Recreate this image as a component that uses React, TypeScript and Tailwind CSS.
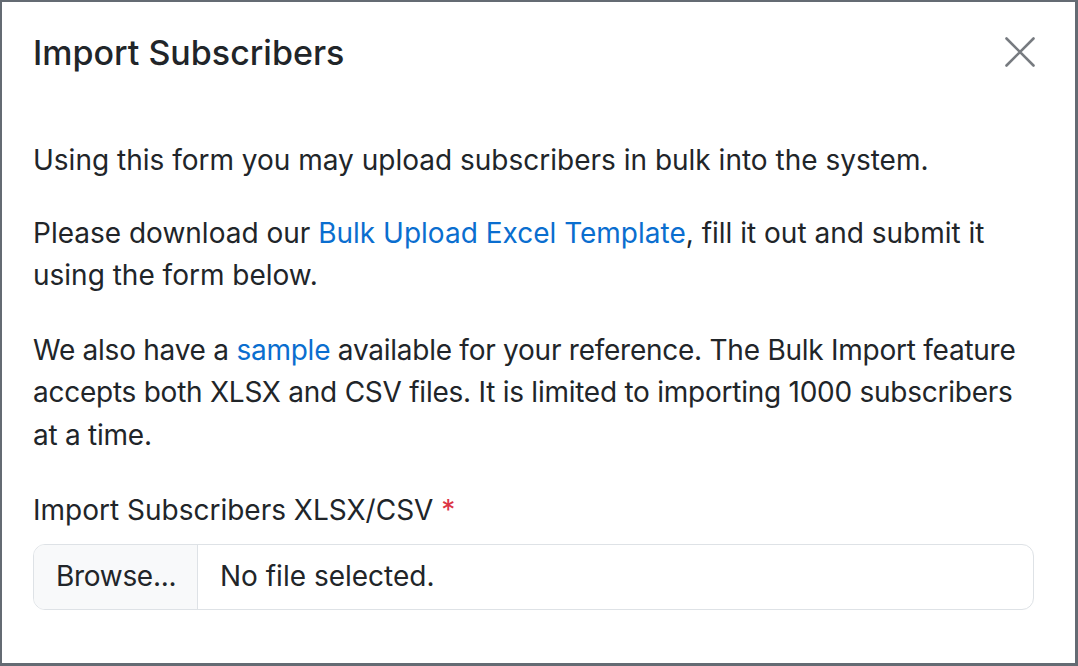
const App = () => {
    return (
        <div className="h-[666px] w-[1078px] bg-[#646b73] pb-[3px] pl-[2px] pr-[3px] pt-[2px] font-['Inter',sans-serif] text-[#212529]">
            <div className="flex h-full w-full flex-col bg-white">
                <div className="flex items-center justify-between pl-[31px] pr-[40px] pt-[29px]">
                    <h5 className="text-[34px] font-medium leading-[44px]">Import Subscribers</h5>
                    <button className="-mt-[3px] text-[#777b80]">
                        <svg width="30" height="30" viewBox="0 0 30 30" fill="none" stroke="currentColor" strokeWidth="2.6" strokeLinecap="round">
                            <path d="M1.5 1.5 L28.5 28.5 M28.5 1.5 L1.5 28.5" />
                        </svg>
                    </button>
                </div>
                <div className="pl-[31px] pr-[42px] pt-[64px] text-[28px] leading-[42.5px]">
                    <p className="mb-[30px]">Using this form you may upload subscribers in bulk into the system.</p>
                    <p className="mb-[32px]">
                        Please download our <a href="#" className="text-[#0a6ecf]">Bulk Upload Excel Template</a>, fill it out and submit it using the form below.
                    </p>
                    <p className="mb-[33px] tracking-[-0.25px]">
                        We also have a <a href="#" className="text-[#0a6ecf]">sample</a> available for your reference. The Bulk Import feature accepts both XLSX and CSV files. It is limited to importing 1000 subscribers at a time.
                    </p>
                    <label className="mb-[12px] block">
                        Import Subscribers XLSX/CSV <span className="text-[#dc3545]">*</span>
                    </label>
                    <div className="flex h-[66px] w-[1001px] overflow-hidden rounded-[12px] border border-[#dee2e6]">
                        <div className="flex w-[164px] items-center border-r border-[#dee2e6] bg-[#f8f9fa] px-[22px] tracking-[-0.3px]">Browse...</div>
                        <div className="flex items-center px-[22px]">No file selected.</div>
                    </div>
                </div>
            </div>
        </div>
    )
}

export default App
